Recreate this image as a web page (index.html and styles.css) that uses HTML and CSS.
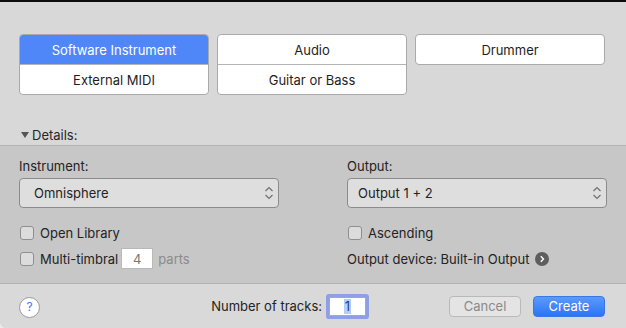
FILE: index.html
```html
<!DOCTYPE html>
<html>
<head>
<meta charset="utf-8">
<link rel="stylesheet" href="styles.css">
</head>
<body>
<div class="window">
  <div class="titlebar"></div>
  <div class="types">
    <div class="group">
      <div class="opt selected">Software Instrument</div>
      <div class="opt">External MIDI</div>
    </div>
    <div class="group">
      <div class="opt">Audio</div>
      <div class="opt">Guitar or Bass</div>
    </div>
    <div class="group">
      <div class="opt">Drummer</div>
    </div>
  </div>
  <div class="disclosure"><span class="tri"></span>Details:</div>
  <div class="details">
    <div class="col">
      <div class="label">Instrument:</div>
      <div class="popup popup-left">
        <span>Omnisphere</span>
        <svg class="updown" width="10" height="14" viewBox="0 0 10 14"><path d="M1.5 5 L5 1.5 L8.5 5 M1.5 9 L5 12.5 L8.5 9" fill="none" stroke="#707070" stroke-width="1.2"/></svg>
      </div>
      <div class="row row-short"><span class="box"></span><span>Open Library</span></div>
      <div class="row row-tall"><span class="box"></span><span>Multi-timbral</span><span class="num">4</span><span class="muted">parts</span></div>
    </div>
    <div class="col">
      <div class="label">Output:</div>
      <div class="popup popup-right">
        <span>Output 1 + 2</span>
        <svg class="updown" width="10" height="14" viewBox="0 0 10 14"><path d="M1.5 5 L5 1.5 L8.5 5 M1.5 9 L5 12.5 L8.5 9" fill="none" stroke="#707070" stroke-width="1.2"/></svg>
      </div>
      <div class="row row-short"><span class="box"></span><span>Ascending</span></div>
      <div class="row row-tall row-device"><span>Output device: Built-in Output</span>
        <svg class="go" width="14" height="14" viewBox="0 0 14 14"><circle cx="7" cy="7" r="7" fill="#5e5e5e"/><path d="M5.8 4.2 L8.5 7 L5.8 9.8" fill="none" stroke="#fff" stroke-width="1.4"/></svg>
      </div>
    </div>
  </div>
  <div class="footer">
    <div class="help">?</div>
    <div class="tracks">
      <span>Number of tracks:</span>
      <div class="field"><span class="sel">1</span></div>
    </div>
    <div class="btn cancel">Cancel</div>
    <div class="btn create">Create</div>
  </div>
</div>
</body>
</html>
```
FILE: styles.css
```css
* { box-sizing: border-box; }
html, body { margin: 0; padding: 0; }
body {
  background: #ececec;
  font-family: Inter, Roboto, "Liberation Sans", sans-serif;
  font-size: 13px;
  line-height: 16px;
  color: #232323;
}
.window {
  width: 626px;
  height: 328px;
  background: #d8d8d8;
  border-bottom-left-radius: 6px;
  overflow: hidden;
}
.titlebar { height: 2px; background: #0c0c0c; }
.types {
  display: grid;
  grid-template-columns: 190px 190px 190px;
  column-gap: 8px;
  align-items: start;
  padding: 32px 19px 0;
}
.group {
  background: #fff;
  border: 1px solid #aaaaaa;
  border-radius: 4px;
  overflow: hidden;
}
.opt {
  height: 29px;
  display: flex;
  align-items: center;
  justify-content: center;
  color: #1e1e1e;
}
.opt + .opt { border-top: 1px solid #b4b4b4; height: 30px; }
.opt.selected { background: #4f87f8; color: #fff; }
.disclosure {
  margin-top: 32px;
  height: 18px;
  padding-left: 21px;
  display: flex;
  align-items: flex-start;
  color: #262626;
}
.tri {
  width: 0; height: 0;
  border-left: 4px solid transparent;
  border-right: 4px solid transparent;
  border-top: 6px solid #555;
  margin-top: 5px;
  margin-right: 3px;
}
.details {
  background: #c7c7c7;
  border-top: 1px solid #b3b3b3;
  padding: 12px 19px 14px;
  display: grid;
  grid-template-columns: 260px 260px;
  column-gap: 68px;
}
.col { display: flex; flex-direction: column; }
.label { height: 16px; }
.popup {
  margin-top: 4px;
  height: 30px;
  background: #dedede;
  border: 1px solid #8b8b8b;
  border-radius: 4px;
  display: flex;
  align-items: center;
  justify-content: space-between;
  padding-right: 4px;
}
.popup-left { padding-left: 14px; }
.popup-right { padding-left: 10px; }
.row { display: flex; align-items: center; }
.row-short { margin-top: 17px; height: 16px; }
.row-tall { margin-top: 7px; height: 21px; }
.box {
  width: 14px; height: 14px;
  margin-left: 1px;
  margin-right: 6px;
  background: #dcdcdc;
  border: 1px solid #8f8f8f;
  border-radius: 3px;
}
.num {
  width: 32px; height: 21px;
  margin-left: 3px;
  background: #fff;
  border: 1px solid #b9b9b9;
  display: flex; align-items: center; justify-content: center;
  color: #777;
}
.muted { color: #8b8b8b; margin-left: 5px; }
.go { margin-left: 5px; }
.footer {
  border-top: 1px solid #b3b3b3;
  height: 45px;
  background: #d9d9d9;
  display: flex;
  align-items: center;
  padding: 0 21px 0 19px;
}
.help {
  width: 21px; height: 21px;
  border-radius: 50%;
  background: #fff;
  border: 1px solid #9a9a9a;
  color: #3d7cf2;
  display: flex; align-items: center; justify-content: center;
  font-size: 12px;
  margin-top: 2px;
}
.tracks {
  margin-left: auto;
  display: flex;
  align-items: center;
  gap: 7px;
}
.field {
  width: 37px; height: 19px;
  background: #fff;
  border: 1px solid #9aa7dc;
  box-shadow: 0 0 0 3px #8f9fe4;
  border-radius: 1px;
  display: flex; align-items: center; justify-content: center;
}
.sel { background: #b2cffc; color: #1d3c9c; padding: 0 1px; line-height: 15px; }
.btn {
  width: 72px; height: 21px;
  border-radius: 4px;
  display: flex; align-items: center; justify-content: center;
}
.cancel {
  margin-left: 83px;
  background: #e4e4e4;
  border: 1px solid #b9b9b9;
  color: #8a8a8a;
}
.create {
  margin-left: 12px;
  background: linear-gradient(#5b9afb, #2c74f6);
  border: 1px solid #3a78e8;
  color: #fff;
}
```
